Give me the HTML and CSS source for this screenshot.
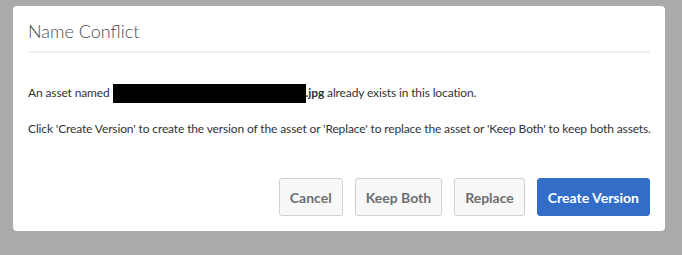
FILE: index.html
```html
<!DOCTYPE html>
<html lang="en">
<head>
  <meta charset="UTF-8">
  <title>Name Conflict</title>
  <link rel="stylesheet" href="styles.css">
</head>
<body>
<div class="dialog">
  <div class="dialog-header">
    <h2>Name Conflict</h2>
  </div>
  <div class="dialog-body">
    <p>An asset named <span class="redacted"></span><b>.jpg</b> already exists in this location.</p>
    <p>Click 'Create Version' to create the version of the asset or 'Replace' to replace the asset or 'Keep Both' to keep both assets.</p>
  </div>
  <div class="dialog-footer">
    <button class="btn">Cancel</button>
    <button class="btn">Keep Both</button>
    <button class="btn">Replace</button>
    <button class="btn primary">Create Version</button>
  </div>
</div>
</body>
</html>
```

FILE: styles.css
```css
body {
  margin: 0;
  background-color: #aaaaaa;
  font-family: 'Lato', sans-serif;
  color: #323232;
}
.dialog {
  margin: 6px 0 0 13px;
  width: 652px;
  height: 225px;
  background-color: white;
  border-radius: 4px;
  box-sizing: border-box;
  padding: 0 15px;
  display: flex;
  flex-direction: column;
}
.dialog-header {
  height: 47px;
  border-bottom: 2px solid #eeeeee;
  box-sizing: border-box;
  display: flex;
  align-items: center;
}
.dialog-header h2 {
  margin: 0;
  padding-top: 4px;
  font-size: 18px;
  font-weight: 300;
  color: #4b4b4b;
}
.dialog-body {
  padding-top: 31px;
  font-size: 12px;
  letter-spacing: -0.13px;
}
.dialog-body p {
  margin: 0 0 17px 0;
  line-height: 17px;
  white-space: nowrap;
}
.redacted {
  display: inline-block;
  width: 193px;
  height: 19px;
  background-color: black;
  vertical-align: -6px;
}
.dialog-footer {
  display: flex;
  justify-content: flex-end;
  gap: 12px;
  margin-top: auto;
  margin-bottom: 15px;
}
.btn {
  height: 38px;
  padding: 0 10px;
  border: 1px solid #d0d0d0;
  border-radius: 3px;
  background-color: #f8f8f8;
  color: #6e6e6e;
  font-family: 'Lato', sans-serif;
  font-size: 14px;
  font-weight: 700;
}
.btn.primary {
  background-color: #326ec8;
  border-color: #326ec8;
  color: white;
}
```
